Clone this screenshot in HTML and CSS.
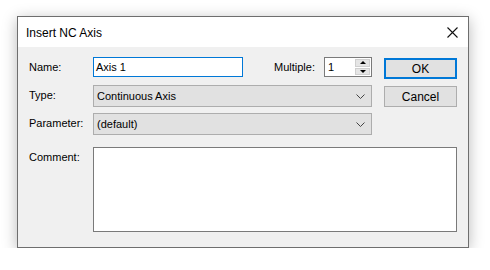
FILE: index.html
```html
<!DOCTYPE html>
<html lang="en">

<head>
    <meta charset="UTF-8">
    <title>Insert NC Axis</title>
    <link rel="stylesheet" href="styles.css">
</head>

<body>

    <!-- Dialog window -->
    <div class="dialog">
        <div class="titlebar">
            <span class="title">Insert NC Axis</span>
            <svg class="close" width="11" height="11" viewBox="0 0 11 11">
                <path d="M0.5 0.5 L10.5 10.5 M10.5 0.5 L0.5 10.5" stroke="#111" stroke-width="1.1" fill="none"/>
            </svg>
        </div>

        <div class="content">
            <label class="label">Name:</label>
            <div class="name-row">
                <div class="textbox focused">Axis 1</div>
                <label class="label multiple">Multiple:</label>
                <div class="spin">
                    <span class="spin-value">1</span>
                    <div class="spin-buttons">
                        <div class="spin-btn"><span class="arrow-up"></span></div>
                        <div class="spin-btn"><span class="arrow-down"></span></div>
                    </div>
                </div>
            </div>
            <button class="btn default">OK</button>

            <label class="label">Type:</label>
            <div class="combo">
                <span>Continuous Axis</span>
                <svg width="9" height="5" viewBox="0 0 9 5"><path d="M0.5 0.5 L4.5 4.5 L8.5 0.5" stroke="#444" fill="none"/></svg>
            </div>
            <button class="btn">Cancel</button>

            <label class="label">Parameter:</label>
            <div class="combo">
                <span>(default)</span>
                <svg width="9" height="5" viewBox="0 0 9 5"><path d="M0.5 0.5 L4.5 4.5 L8.5 0.5" stroke="#444" fill="none"/></svg>
            </div>
            <div></div>

            <label class="label comment-label">Comment:</label>
            <div class="comment"></div>
        </div>
    </div>

</body>

</html>
```

FILE: styles.css
```css
body {
    margin: 0;
    background: #fff;
    font-family: "Liberation Sans", Arial, sans-serif;
    font-size: 11px;
    color: #000;
}

.dialog {
    width: 450px;
    height: 230px;
    margin: 16px 0 0 17px;
    border: 1px solid #6e6e6e;
    background: #f0f0f0;
    box-shadow: 0 3px 14px rgba(0, 0, 0, 0.28);
}

.titlebar {
    height: 30px;
    background: #fff;
    display: flex;
    align-items: center;
    justify-content: space-between;
    padding: 0 10px 0 8px;
}

.title {
    font-size: 12px;
    margin-top: 1px;
}

.close {
    margin-top: 1px;
}

.content {
    display: grid;
    grid-template-columns: 52px 279px 73px;
    grid-template-rows: 22px 22px 22px 85px;
    column-gap: 12px;
    row-gap: 6px;
    padding: 10px 0 0 11px;
}

.label {
    line-height: 20px;
}

.comment-label {
    margin-top: 6px;
}

.name-row {
    display: flex;
    align-items: flex-start;
}

.textbox {
    width: 146px;
    height: 18px;
    line-height: 18px;
    background: #fff;
    border: 1px solid #7a7a7a;
    padding-left: 2px;
}

.textbox.focused {
    border-color: #0078d7;
}

.multiple {
    margin-left: auto;
    margin-right: 9px;
}

.spin {
    width: 46px;
    height: 18px;
    border: 1px solid #7a7a7a;
    background: #fff;
    display: flex;
    justify-content: space-between;
}

.spin-value {
    line-height: 18px;
    padding-left: 3px;
}

.spin-buttons {
    width: 15px;
    display: flex;
    flex-direction: column;
    gap: 1px;
    padding: 1px 1px 1px 0;
}

.spin-btn {
    flex: 1;
    background: #e5e5e5;
    border: 1px solid #cfcfcf;
    display: flex;
    align-items: center;
    justify-content: center;
}

.arrow-up {
    border-left: 3px solid transparent;
    border-right: 3px solid transparent;
    border-bottom: 3px solid #000;
}

.arrow-down {
    border-left: 3px solid transparent;
    border-right: 3px solid transparent;
    border-top: 3px solid #000;
}

.btn {
    font-family: inherit;
    font-size: 12px;
    height: 21px;
    margin-top: 1px;
    background: #e1e1e1;
    border: 1px solid #adadad;
    padding: 0;
    color: #000;
}

.btn.default {
    border: 2px solid #0078d7;
}

.combo {
    height: 20px;
    background: #e1e1e1;
    border: 1px solid #adadad;
    display: flex;
    align-items: center;
    justify-content: space-between;
    padding: 0 6px 0 3px;
}

.comment {
    grid-column: 2 / 4;
    margin-top: 6px;
    height: 83px;
    background: #fff;
    border: 1px solid #7a7a7a;
}
```
